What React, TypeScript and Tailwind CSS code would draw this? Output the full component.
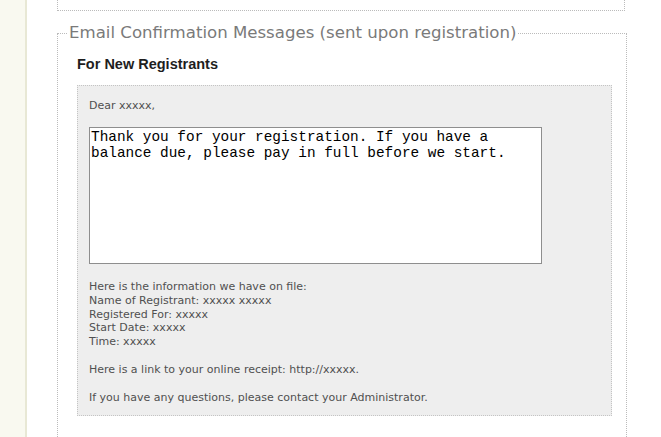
import React from "react";

export default function App() {
  const body = { fontFamily: '"DejaVu Sans", "Liberation Sans", sans-serif' };
  return (
    <div className="flex h-[437px] w-[661px] overflow-hidden bg-white" style={body}>
      <div className="h-full w-[27px] shrink-0 border-r-2 border-[#e8e8d5] bg-[#f9f9f0]" />
      <div className="flex flex-col">
        <div className="ml-[30px] h-[11px] w-[568px] shrink-0 border-x border-b border-dotted border-[#bbbbbb]" />
        <fieldset className="ml-[30px] mt-[11px] w-[570px] shrink-0 border border-dotted border-[#bbbbbb] pb-[30px]">
          <legend className="ml-[9px] px-[2px] text-[16.6px] leading-[22px] text-[#7a7a7a]">
            Email Confirmation Messages (sent upon registration)
          </legend>
          <div className="pl-[19px] pr-[14px]">
            <div
              className="mt-[11px] text-[14.5px] font-bold leading-[18px] text-[#1e1e1e]"
              style={{ fontFamily: '"Liberation Sans", Arial, sans-serif' }}
            >
              For New Registrants
            </div>
            <div className="mt-[12px] border border-dotted border-[#c4c4c4] bg-[#eeeeee] px-[11px] pb-[10px] pt-[13px] text-[11px] leading-[14px] text-[#505050]">
              <p>Dear xxxxx,</p>
              <textarea
                readOnly
                className="mt-[14px] block h-[137px] w-[453px] resize-none border border-[#8e8e8e] bg-white px-[1px] pt-[2px] text-[14.4px] leading-[15.5px] text-black outline-none"
                style={{ fontFamily: '"Liberation Mono", "Courier New", monospace' }}
                defaultValue="Thank you for your registration. If you have a balance due, please pay in full before we start."
              />
              <p className="mt-[16px] leading-[13.75px]">
                Here is the information we have on file:
                <br />
                Name of Registrant: xxxxx xxxxx
                <br />
                Registered For: xxxxx
                <br />
                Start Date: xxxxx
                <br />
                Time: xxxxx
              </p>
              <p className="mt-[14px]">Here is a link to your online receipt: http://xxxxx.</p>
              <p className="mt-[14px]">If you have any questions, please contact your Administrator.</p>
            </div>
          </div>
        </fieldset>
      </div>
    </div>
  );
}
